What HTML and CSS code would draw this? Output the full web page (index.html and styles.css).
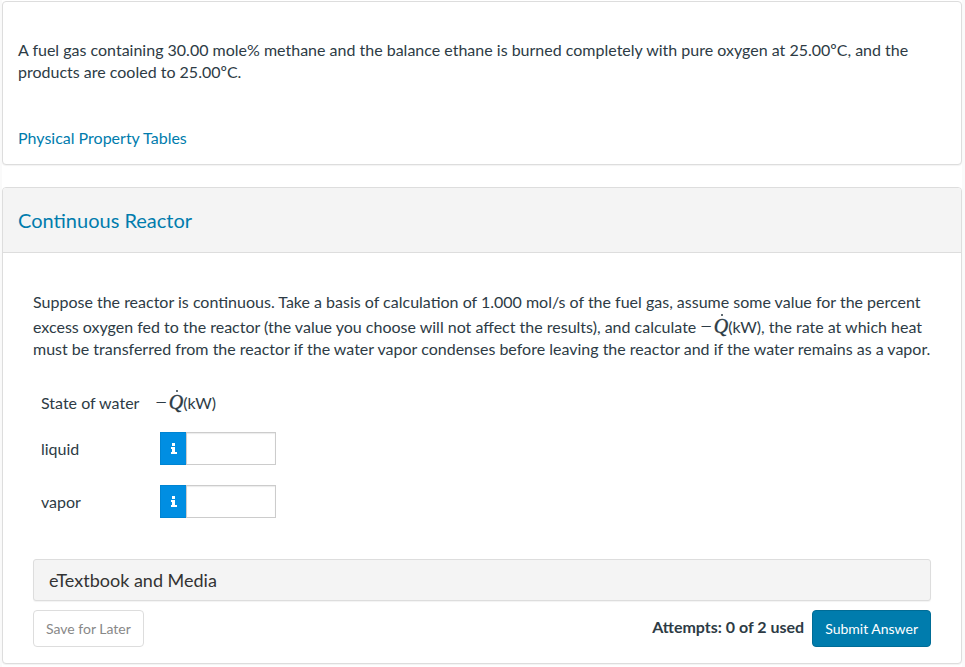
FILE: index.html
```html
<!DOCTYPE html>
<html lang="en">
<head>
<meta charset="utf-8">
<title>Continuous Reactor</title>
<link rel="stylesheet" href="styles.css">
</head>
<body>
<main class="page">
  <section class="card intro">
    <p>A fuel gas containing 30.00 mole% methane and the balance ethane is burned completely with pure oxygen at 25.00ºC, and the products are cooled to 25.00ºC.</p>
    <p class="reference"><a href="#tables">Physical Property Tables</a></p>
  </section>

  <form class="card question">
    <header class="question-header">
      <h2>Continuous Reactor</h2>
    </header>
    <div class="question-body">
      <p>Suppose the reactor is continuous. Take a basis of calculation of 1.000 mol/s of the fuel gas, assume some value for the percent excess oxygen fed to the reactor (the value you choose will not affect the results), and calculate <span class="math"><span>−</span><i class="rate">Q</i></span>(kW), the rate at which heat must be transferred from the reactor if the water vapor condenses before leaving the reactor and if the water remains as a vapor.</p>

      <table class="answers">
        <thead>
          <tr>
            <th scope="col">State of water</th>
            <th scope="col"><span class="math"><span>−</span><i class="rate">Q</i></span>(kW)</th>
          </tr>
        </thead>
        <tbody>
          <tr>
            <td><label for="liquid">liquid</label></td>
            <td>
              <div class="field">
                <button type="button" class="info" aria-label="Answer information"><svg viewBox="0 0 6 11" width="6" height="11" aria-hidden="true"><path d="M1 0h3v3H1zM0 4h4v5h2v2H0V9h1V6H0z"/></svg></button>
                <input id="liquid" type="text">
              </div>
            </td>
          </tr>
          <tr>
            <td><label for="vapor">vapor</label></td>
            <td>
              <div class="field">
                <button type="button" class="info" aria-label="Answer information"><svg viewBox="0 0 6 11" width="6" height="11" aria-hidden="true"><path d="M1 0h3v3H1zM0 4h4v5h2v2H0V9h1V6H0z"/></svg></button>
                <input id="vapor" type="text">
              </div>
            </td>
          </tr>
        </tbody>
      </table>

      <button type="button" class="media">eTextbook and Media</button>

      <footer class="actions">
        <button type="button" class="btn btn-save">Save for Later</button>
        <span class="attempts">Attempts: 0 of 2 used</span>
        <button type="submit" class="btn btn-submit">Submit Answer</button>
      </footer>
    </div>
  </form>
</main>
</body>
</html>
```

FILE: styles.css
```css
* {
  box-sizing: border-box;
}

body {
  margin: 0;
  padding: 0 3px 0 2px;
  background: #fafafa;
  color: #2d3b45;
  font: 16px/22px Lato, "Liberation Sans", sans-serif;
}

button,
input {
  font-family: inherit;
}

p,
h2 {
  margin: 0;
}

a {
  color: #007cad;
  text-decoration: none;
}

.page {
  display: flex;
  flex-direction: column;
  gap: 22px;
  padding: 1px 0 4px;
  background: #fff;
}

.card {
  background: #fff;
  border: 1px solid #ddd;
  border-radius: 4px;
  box-shadow: 0 1px 1px rgba(0, 0, 0, 0.05);
}

.intro {
  padding: 37px 15px 15px;
}

.reference {
  margin-top: 44px;
}

.question-header {
  padding: 21px 15px;
  background: #f4f4f4;
  border-bottom: 1px solid #ddd;
  border-radius: 3px 3px 0 0;
}

.question-header h2 {
  color: #007cad;
  font-size: 20px;
  font-weight: 400;
  line-height: 22px;
}

.question-body {
  padding: 38px 30px 16px;
}

.math {
  display: inline-flex;
  gap: 2px;
  padding-top: 2px;
  font-family: "Liberation Serif", serif;
  font-size: 20px;
  line-height: 22px;
}

.rate {
  position: relative;
  -webkit-text-stroke: 0.4px currentColor;
}

.rate::before {
  content: "";
  position: absolute;
  top: -1px;
  left: 7px;
  width: 2px;
  height: 2px;
  border-radius: 1px;
  background: currentColor;
}

.answers {
  margin-top: 25px;
  border-collapse: collapse;
}

.answers th {
  padding: 4px 8px 8px;
  font-weight: 400;
  text-align: left;
  vertical-align: baseline;
}

.answers td {
  padding: 10px 8px;
}

.answers td + td {
  padding-left: 13px;
}

.field {
  display: flex;
}

.info {
  display: flex;
  align-items: center;
  justify-content: center;
  width: 26px;
  height: 33px;
  padding: 0;
  background: #008ee2;
  border: 1px solid #0084d2;
  border-right: 0;
}

.info svg {
  fill: #fff;
}

.field input {
  width: 90px;
  height: 33px;
  padding: 4px 8px;
  background: #fff;
  border: 1px solid #ccc;
  border-radius: 0;
  box-shadow: inset 0 1px 1px rgba(0, 0, 0, 0.08);
  color: inherit;
  font-size: 14px;
}

.media {
  display: block;
  width: 100%;
  margin-top: 31px;
  padding: 9px 15px;
  background: #f4f4f4;
  border: 1px solid #ddd;
  border-radius: 3px;
  box-shadow: 0 1px 1px rgba(0, 0, 0, 0.05);
  color: #333;
  font-size: 18px;
  line-height: 22px;
  text-align: left;
}

.actions {
  display: flex;
  align-items: center;
  gap: 8px;
  margin-top: 9px;
}

.btn {
  padding: 8px 12px;
  border: 1px solid #ddd;
  border-radius: 4px;
  font-size: 14px;
  line-height: 19px;
}

.btn-save {
  background: #fff;
  color: #888;
}

.btn-submit {
  background: #007cad;
  border-color: #006c96;
  color: #fff;
}

.attempts {
  margin-left: auto;
  padding-bottom: 4px;
  font-weight: 700;
}
```
